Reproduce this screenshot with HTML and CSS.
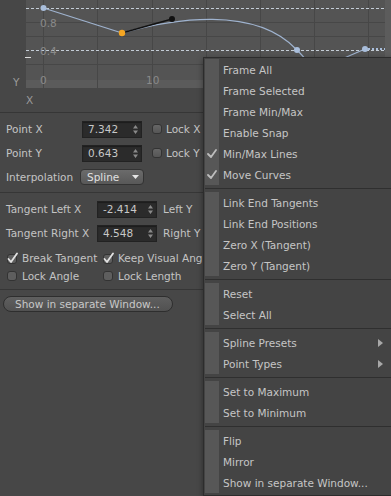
FILE: index.html
```html
<!DOCTYPE html>
<html>
<head>
<meta charset="utf-8">
<link rel="stylesheet" href="styles.css">
</head>
<body>
<div class="app">
  <div class="graph">
    <svg width="391" height="88" viewBox="0 0 391 88">
      <rect x="26" y="0" width="359" height="80" fill="#545454"/>
      <rect x="26" y="80" width="359" height="8" fill="#5b5b5b"/>
      <rect x="385" y="0" width="6" height="88" fill="#5c5c5c"/>
      <g stroke="#474747" stroke-width="1" fill="none">
        <path d="M26 22.5H385M26 36.5H385M26 64.5H385"/>
        <path d="M43.5 0V88M97.5 0V88M152.5 0V88M206.5 0V88M260.5 0V88M314.5 0V88M368.5 0V88"/>
      </g>
      <g stroke="#c3ccd6" stroke-dasharray="3 2" fill="none">
        <path d="M26 8.5H385M26 50.5H385"/>
      </g>
      <g font-family="DejaVu Sans" font-size="10.5" fill="#8a8a8a">
        <text x="40" y="26.5">0.8</text>
        <text x="40" y="54.5">0.4</text>
        <text x="40" y="84">0</text>
        <text x="146" y="84">10</text>
      </g>
      <text x="13" y="86" font-family="DejaVu Sans" font-size="10.5" fill="#9a9a9a">Y</text>
      <path d="M25 57.5H31" stroke="#dcdcdc"/>
      <g fill="none" stroke="#9fb3cf" stroke-width="1.2">
        <path d="M43.5 8L122 33"/>
        <path d="M122 33C172 19 255 5 297 50Q303 56 306 60"/>
        <path d="M335 62L365 49"/>
      </g>
      <path d="M368 49H385" stroke="#a9bedb" stroke-width="2" stroke-dasharray="2 2"/>
      <path d="M122 33L172 19" stroke="#111" stroke-width="1.3"/>
      <circle cx="43.5" cy="8" r="3" fill="#a9bedb"/>
      <circle cx="297" cy="50" r="3" fill="#a9bedb"/>
      <circle cx="365" cy="49" r="3" fill="#a9bedb"/>
      <circle cx="172" cy="19" r="3" fill="#111"/>
      <circle cx="122" cy="33" r="3.2" fill="#f5a623"/>
    </svg>
  </div>
  <div class="xrow">X</div>

  <div class="section s1">
    <div class="row r24">
      <span class="lbl w76">Point X</span>
      <div class="num"><span>7.342</span><svg class="spin" width="5" height="9" viewBox="0 0 5 9"><path d="M0 3.5L2.5 0L5 3.5ZM0 5.5L2.5 9L5 5.5Z" fill="#8a8a8a"/></svg></div>
      <span class="cb"></span><span class="cbt">Lock X</span>
    </div>
    <div class="row r24">
      <span class="lbl w76">Point Y</span>
      <div class="num"><span>0.643</span><svg class="spin" width="5" height="9" viewBox="0 0 5 9"><path d="M0 3.5L2.5 0L5 3.5ZM0 5.5L2.5 9L5 5.5Z" fill="#8a8a8a"/></svg></div>
      <span class="cb"></span><span class="cbt">Lock Y</span>
    </div>
    <div class="row r23">
      <span class="lbl w74">Interpolation</span>
      <div class="drop"><span>Spline</span><svg width="7" height="4" viewBox="0 0 7 4"><path d="M0 0H7L3.5 4Z" fill="#e6e6e6"/></svg></div>
    </div>
  </div>

  <div class="section s2">
    <div class="row r24">
      <span class="lbl w91">Tangent Left X</span>
      <div class="num"><span>-2.414</span><svg class="spin" width="5" height="9" viewBox="0 0 5 9"><path d="M0 3.5L2.5 0L5 3.5ZM0 5.5L2.5 9L5 5.5Z" fill="#8a8a8a"/></svg></div>
      <span class="after">Left Y</span>
    </div>
    <div class="row r24">
      <span class="lbl w91">Tangent Right X</span>
      <div class="num"><span>4.548</span><svg class="spin" width="5" height="9" viewBox="0 0 5 9"><path d="M0 3.5L2.5 0L5 3.5ZM0 5.5L2.5 9L5 5.5Z" fill="#8a8a8a"/></svg></div>
      <span class="after">Right Y</span>
    </div>
    <div class="row r18 first">
      <div class="opt">
        <svg class="ic" width="12" height="12" viewBox="0 0 12 12"><rect x="1.5" y="2.5" width="9" height="9" rx="2.5" fill="#5e5e5e" stroke="#333"/><path d="M2.5 7L5 10L11 1.5" fill="none" stroke="#e2e2e2" stroke-width="1.8" stroke-linecap="round" stroke-linejoin="round"/></svg>
        <span>Break Tangent</span>
      </div>
      <div class="opt last">
        <svg class="ic" width="12" height="12" viewBox="0 0 12 12"><rect x="1.5" y="2.5" width="9" height="9" rx="2.5" fill="#5e5e5e" stroke="#333"/><path d="M2.5 7L5 10L11 1.5" fill="none" stroke="#e2e2e2" stroke-width="1.8" stroke-linecap="round" stroke-linejoin="round"/></svg>
        <span>Keep Visual Angle</span>
      </div>
    </div>
    <div class="row r18">
      <div class="opt">
        <svg class="ic" width="12" height="12" viewBox="0 0 12 12"><rect x="1.5" y="1.5" width="9" height="9" rx="2.5" fill="#5e5e5e" stroke="#333"/></svg>
        <span>Lock Angle</span>
      </div>
      <div class="opt last">
        <svg class="ic" width="12" height="12" viewBox="0 0 12 12"><rect x="1.5" y="1.5" width="9" height="9" rx="2.5" fill="#5e5e5e" stroke="#333"/></svg>
        <span>Lock Length</span>
      </div>
    </div>
  </div>

  <div class="section s3">
    <div class="btn">Show in separate Window...</div>
  </div>

  <div class="menu">
    <div class="group">
      <div class="item"><span class="gut"></span><span class="txt">Frame All</span></div>
      <div class="item"><span class="gut"></span><span class="txt">Frame Selected</span></div>
      <div class="item"><span class="gut"></span><span class="txt">Frame Min/Max</span></div>
      <div class="item"><span class="gut"></span><span class="txt">Enable Snap</span></div>
      <div class="item"><span class="gut"><svg width="10" height="9" viewBox="0 0 10 9"><path d="M1 5L4 8L9 1" fill="none" stroke="#bdbdbd" stroke-width="1.8" stroke-linecap="round" stroke-linejoin="round"/></svg></span><span class="txt">Min/Max Lines</span></div>
      <div class="item"><span class="gut"><svg width="10" height="9" viewBox="0 0 10 9"><path d="M1 5L4 8L9 1" fill="none" stroke="#bdbdbd" stroke-width="1.8" stroke-linecap="round" stroke-linejoin="round"/></svg></span><span class="txt">Move Curves</span></div>
    </div>
    <div class="sep"></div>
    <div class="group">
      <div class="item"><span class="gut"></span><span class="txt">Link End Tangents</span></div>
      <div class="item"><span class="gut"></span><span class="txt">Link End Positions</span></div>
      <div class="item"><span class="gut"></span><span class="txt">Zero X (Tangent)</span></div>
      <div class="item"><span class="gut"></span><span class="txt">Zero Y (Tangent)</span></div>
    </div>
    <div class="sep"></div>
    <div class="group">
      <div class="item"><span class="gut"></span><span class="txt">Reset</span></div>
      <div class="item"><span class="gut"></span><span class="txt">Select All</span></div>
    </div>
    <div class="sep"></div>
    <div class="group">
      <div class="item"><span class="gut"></span><span class="txt">Spline Presets</span><svg class="sub" width="5" height="8" viewBox="0 0 5 8"><path d="M0 0L5 4L0 8Z" fill="#a8a8a8"/></svg></div>
      <div class="item"><span class="gut"></span><span class="txt">Point Types</span><svg class="sub" width="5" height="8" viewBox="0 0 5 8"><path d="M0 0L5 4L0 8Z" fill="#a8a8a8"/></svg></div>
    </div>
    <div class="sep"></div>
    <div class="group">
      <div class="item"><span class="gut"></span><span class="txt">Set to Maximum</span></div>
      <div class="item"><span class="gut"></span><span class="txt">Set to Minimum</span></div>
    </div>
    <div class="sep"></div>
    <div class="group">
      <div class="item"><span class="gut"></span><span class="txt">Flip</span></div>
      <div class="item"><span class="gut"></span><span class="txt">Mirror</span></div>
      <div class="item"><span class="gut"></span><span class="txt">Show in separate Window...</span></div>
    </div>
  </div>
</div>
</body>
</html>
```

FILE: styles.css
```css
html, body {
  margin: 0;
  padding: 0;
  overflow: hidden;
  background: #474747;
}

body {
  font-family: "DejaVu Sans", sans-serif;
  font-size: 10.5px;
  color: #c4c4c4;
}

.app {
  position: relative;
  width: 391px;
  height: 496px;
  overflow: hidden;
  background: #474747;
}

.graph {
  height: 88px;
}

.graph svg {
  display: block;
}

.xrow {
  height: 24px;
  display: flex;
  align-items: center;
  padding-left: 26px;
  color: #9a9a9a;
  font-size: 10.5px;
}

.section {
  border-top: 1px solid #363636;
  width: 203px;
  box-sizing: border-box;
}

.s1, .s2 {
  padding: 4px 0 4px 0;
}

.s3 {
  padding-top: 6px;
}

.row {
  display: flex;
  align-items: center;
  padding-left: 6px;
  white-space: nowrap;
}

.r24 { height: 24px; }
.r23 { height: 23px; }
.r18 { height: 18px; }
.first { margin-top: 4px; }

.lbl { flex: none; }
.w74 { width: 74px; }
.w76 { width: 76px; }
.w91 { width: 91px; }

.num {
  flex: none;
  width: 60px;
  height: 17px;
  box-sizing: border-box;
  background: #2b2b2b;
  border: 1px solid #222;
  box-shadow: inset 0 1px 1px rgba(0,0,0,0.35);
  display: flex;
  align-items: center;
  padding-left: 5px;
  padding-right: 3px;
  color: #c8c8c8;
}

.num span {
  flex: 1;
}

.spin {
  display: block;
}

.cb {
  flex: none;
  width: 10px;
  height: 10px;
  box-sizing: border-box;
  margin-left: 10px;
  border-radius: 3px;
  background: linear-gradient(#666, #565656);
  border: 1px solid #333;
}

.cbt {
  margin-left: 4px;
}

.after {
  margin-left: 6px;
}

.drop {
  flex: none;
  width: 64px;
  height: 16px;
  box-sizing: border-box;
  border: 1px solid #333;
  border-radius: 4px;
  background: linear-gradient(#6b6b6b, #585858);
  display: flex;
  align-items: center;
  padding-left: 6px;
  padding-right: 4px;
  color: #e0e0e0;
}

.drop span {
  flex: 1;
}

.drop svg {
  display: block;
}

.opt {
  flex: none;
  width: 96px;
  display: flex;
  align-items: center;
}

.opt.last {
  width: auto;
}

.opt .ic {
  flex: none;
  display: block;
  margin-right: 4px;
}

.btn {
  margin-left: 3px;
  width: 170px;
  height: 16px;
  box-sizing: border-box;
  border: 1px solid #2e2e2e;
  border-radius: 8px;
  background: linear-gradient(#5f5f5f, #515151);
  padding-left: 11px;
  display: flex;
  align-items: center;
  color: #c8c8c8;
  white-space: nowrap;
}

/* context menu overlay */
.menu {
  position: absolute;
  left: 203px;
  top: 57px;
  width: 192px;
  box-sizing: border-box;
  background: #444;
  border: 1px solid #2c2c2c;
  padding: 1px 0 2px 0;
  box-shadow: 0 2px 6px rgba(0,0,0,0.4);
  color: #c6c6c6;
  font-size: 10.5px;
}

.group {
  display: flex;
  flex-direction: column;
}

.item {
  height: 21px;
  display: flex;
  align-items: center;
  margin-left: 1px;
  white-space: nowrap;
}

.gut {
  flex: none;
  width: 14px;
  height: 21px;
  background: #575757;
  display: flex;
  align-items: center;
  justify-content: center;
}

.gut svg {
  display: block;
}

.txt {
  flex: 1;
  padding-left: 4px;
}

.sub {
  flex: none;
  display: block;
  margin-right: 11px;
}

.sep {
  height: 3px;
  margin: 0 0 3px 1px;
  border-bottom: 1px solid #2f2f2f;
}
```
